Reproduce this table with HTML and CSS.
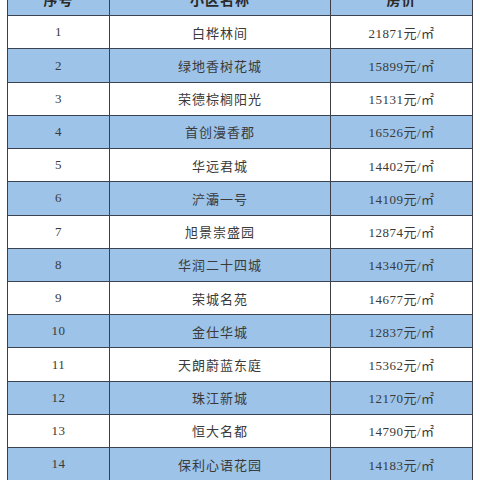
FILE: index.html
```html
<!DOCTYPE html>
<html lang="zh">
<head>
<meta charset="utf-8">
<link rel="stylesheet" href="styles.css">
</head>
<body>
<div class="table">
  <div class="row blue head"><div class="cell">序号</div><div class="cell">小区名称</div><div class="cell">房价</div></div>
  <div class="row"><div class="cell num">1</div><div class="cell">白桦林间</div><div class="cell num">21871元/㎡</div></div>
  <div class="row blue"><div class="cell num">2</div><div class="cell">绿地香树花城</div><div class="cell num">15899元/㎡</div></div>
  <div class="row"><div class="cell num">3</div><div class="cell">荣德棕榈阳光</div><div class="cell num">15131元/㎡</div></div>
  <div class="row blue"><div class="cell num">4</div><div class="cell">首创漫香郡</div><div class="cell num">16526元/㎡</div></div>
  <div class="row"><div class="cell num">5</div><div class="cell">华远君城</div><div class="cell num">14402元/㎡</div></div>
  <div class="row blue"><div class="cell num">6</div><div class="cell">浐灞一号</div><div class="cell num">14109元/㎡</div></div>
  <div class="row"><div class="cell num">7</div><div class="cell">旭景崇盛园</div><div class="cell num">12874元/㎡</div></div>
  <div class="row blue"><div class="cell num">8</div><div class="cell">华润二十四城</div><div class="cell num">14340元/㎡</div></div>
  <div class="row"><div class="cell num">9</div><div class="cell">荣城名苑</div><div class="cell num">14677元/㎡</div></div>
  <div class="row blue"><div class="cell num">10</div><div class="cell">金仕华城</div><div class="cell num">12837元/㎡</div></div>
  <div class="row"><div class="cell num">11</div><div class="cell">天朗蔚蓝东庭</div><div class="cell num">15362元/㎡</div></div>
  <div class="row blue"><div class="cell num">12</div><div class="cell">珠江新城</div><div class="cell num">12170元/㎡</div></div>
  <div class="row"><div class="cell num">13</div><div class="cell">恒大名都</div><div class="cell num">14790元/㎡</div></div>
  <div class="row blue"><div class="cell num">14</div><div class="cell">保利心语花园</div><div class="cell num">14183元/㎡</div></div>
</div>
</body>
</html>
```
FILE: styles.css
```css
html, body {
  margin: 0;
  padding: 0;
  background: #ffffff;
  overflow: hidden;
}
body {
  width: 480px;
  height: 480px;
  font-family: "Liberation Serif", "Noto Sans CJK SC", serif;
  color: #3a3a3a;
  font-size: 13px;
}
.table {
  margin: -18px 0 0 7px;
  width: 466px;
  border-left: 1px solid #3c3f45;
  border-top: 1px solid #3c3f45;
  box-sizing: border-box;
}
.row {
  display: grid;
  grid-template-columns: 102px 221px 142px;
  height: 33.23px;
  box-sizing: border-box;
  border-bottom: 1px solid #3c4350;
  background: #ffffff;
}
.row.blue {
  background: #9dc3e8;
}
.cell {
  border-right: 1px solid #3c3f45;
  display: flex;
  align-items: center;
  justify-content: center;
  letter-spacing: 1px;
}
.head .cell {
  font-weight: bold;
  color: #2a2a2a;
  font-size: 14px;
}
.num {
  letter-spacing: 0.5px;
}
```
